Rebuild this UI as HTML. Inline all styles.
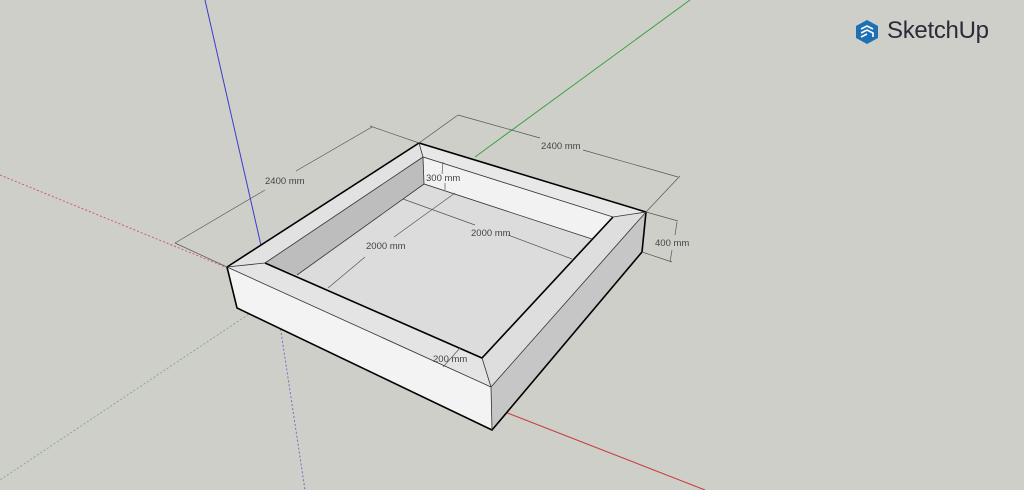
<!DOCTYPE html>
<html><head><style>
html,body{margin:0;padding:0;background:#cfcfca;width:1024px;height:490px;overflow:hidden}
svg{position:absolute;left:0;top:0}
text{font-family:"Liberation Sans",sans-serif;font-size:9.5px;fill:#444}
.logo{position:absolute;left:855px;top:17px;font-family:"Liberation Sans",sans-serif;font-size:24px;color:#2b2b3a;letter-spacing:-0.3px}
</style></head><body>
<svg width="1024" height="490" viewBox="0 0 1024 490">
<!-- axes -->
<line x1="205" y1="0" x2="265" y2="263" stroke="#3c3cc8" stroke-width="1"/>
<line x1="475" y1="157" x2="690" y2="0" stroke="#3ca03c" stroke-width="1"/>
<line x1="0" y1="175" x2="228" y2="268" stroke="#c86060" stroke-width="1" stroke-dasharray="2,2"/>
<line x1="505" y1="412" x2="705" y2="490" stroke="#c83c3c" stroke-width="1"/>
<line x1="255" y1="310" x2="0" y2="480" stroke="#80b080" stroke-width="1" stroke-dasharray="2,2"/>
<line x1="280" y1="325" x2="305" y2="490" stroke="#7070c0" stroke-width="1" stroke-dasharray="2,2"/>
<!-- box faces -->
<polygon points="227,267 491,387 492,430 237,308" fill="#f3f3f3"/>
<polygon points="491,387 646,212 642,252 492,430" fill="#c6c6c6"/>
<polygon points="227,267 419,143 423,157 265,263" fill="#e2e2e2"/>
<polygon points="419,143 646,212 613,217 423,157" fill="#e8e8e8"/>
<polygon points="646,212 491,387 482,358 613,217" fill="#dedede"/>
<polygon points="227,267 265,263 482,358 491,387" fill="#e4e4e4"/>
<polygon points="265,263 423,157 424,184 297,275" fill="#bdbdbd"/>
<polygon points="423,157 613,217 592,239 424,184" fill="#f2f2f2"/>
<polygon points="297,275 424,184 592,239 482,358 265,263" fill="#dcdcdc"/>
<!-- edges -->
<g stroke="#000" fill="none" stroke-width="1.6">
<polyline points="227,267 419,143 646,212"/>
<polyline points="265,263 482,358 613,217"/>
<polyline points="227,267 237,308 492,430 642,252 646,212"/>
</g>
<g stroke="#333" fill="none" stroke-width="0.8">
<line x1="227" y1="267" x2="491" y2="387"/>
<line x1="491" y1="387" x2="646" y2="212"/>
<line x1="491" y1="387" x2="492" y2="430"/>
<line x1="227" y1="267" x2="265" y2="263"/>
<line x1="419" y1="143" x2="423" y2="157"/>
<line x1="646" y1="212" x2="613" y2="217"/>
<line x1="482" y1="358" x2="491" y2="387"/>
<polyline points="265,263 423,157 613,217"/>
<polyline points="297,275 424,184 592,239"/>
<line x1="423" y1="157" x2="424" y2="184"/>
</g>
<!-- dimensions -->
<g stroke="#555" stroke-width="0.7" fill="none">
<line x1="227" y1="267" x2="175" y2="243"/>
<line x1="419" y1="143" x2="370" y2="126"/>
<line x1="175" y1="243" x2="265" y2="190"/><line x1="296" y1="171" x2="372" y2="127"/>
<line x1="419" y1="143" x2="458" y2="115"/><line x1="646" y1="212" x2="680" y2="176"/>
<line x1="458" y1="115" x2="540" y2="138"/><line x1="583" y1="150" x2="678" y2="177"/>
<line x1="646" y1="212" x2="678" y2="221"/><line x1="642" y1="252" x2="672" y2="262"/>
<line x1="677" y1="222" x2="675" y2="235"/><line x1="672" y1="250" x2="670" y2="262"/>
<line x1="443" y1="162" x2="442" y2="174"/><line x1="445" y1="183" x2="445" y2="190"/>
<line x1="403" y1="199" x2="475" y2="225"/><line x1="508" y1="235" x2="572" y2="259"/>
<line x1="455" y1="193" x2="394" y2="237"/><line x1="365" y1="257" x2="328" y2="288"/>
<line x1="460" y1="348" x2="443" y2="367"/>
</g>
<text x="265" y="184">2400 mm</text>
<text x="541" y="149">2400 mm</text>
<text x="655" y="246">400 mm</text>
<text x="426" y="181">300 mm</text>
<text x="471" y="236">2000 mm</text>
<text x="366" y="249">2000 mm</text>
<text x="433" y="362">200 mm</text>
</svg>
<div class="logo"><svg width="24" height="26" viewBox="0 0 24 26" style="position:absolute;left:0;top:2px"><path d="M12 1 L23 7 V19 L12 25 L1 19 V7 Z" fill="#1e6fb4"/><path d="M6 10 L12 7 L18 10 M6 14 L12 11 L18 14 V18 M6 18 L12 15" stroke="#fff" stroke-width="1.6" fill="none"/></svg><span style="margin-left:32px">SketchUp</span></div>
</body></html>
